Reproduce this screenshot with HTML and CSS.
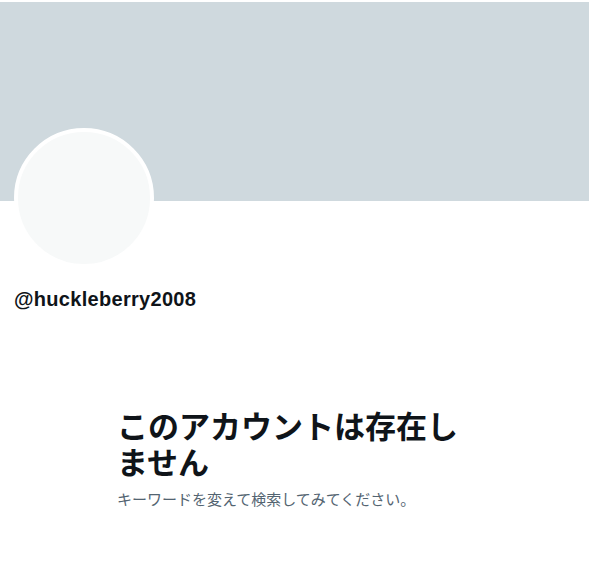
FILE: index.html
```html
<!DOCTYPE html>
<html lang="ja">
<head>
    <meta charset="UTF-8">
    <meta name="viewport" content="width=device-width, initial-scale=1.0">
    <title>プロフィール</title>
    <link rel="stylesheet" href="styles.css">
</head>
<body>
    <div class="perfil">
        <div class="banner"></div>
        <div class="avatar-fila">
            <div class="avatar"></div>
        </div>
        <div class="usuario">@huckleberry2008</div>

        <div class="aviso">
            <h2>このアカウントは存在しません</h2>
            <p>キーワードを変えて検索してみてください。</p>
        </div>
    </div>
</body>
</html>
```

FILE: styles.css
```css
body {
    margin: 0;
    background-color: #ffffff;
    font-family: "Liberation Sans", "Noto Sans CJK JP", sans-serif;
    color: #0f1419;
}

.perfil {
    padding-top: 2px;
}

.banner {
    height: 199px;
    background-color: #cfd9de;
}

.avatar-fila {
    padding: 0 14px;
}

.avatar {
    width: 140px;
    height: 140px;
    box-sizing: border-box;
    margin-top: -73px;
    border: 4px solid #ffffff;
    border-radius: 50%;
    background-color: #f7f9f9;
}

.usuario {
    margin-top: 19px;
    padding-left: 14px;
    font-size: 20px;
    line-height: 24px;
    font-weight: 700;
    letter-spacing: 0.3px;
}

.aviso {
    width: 355px;
    margin: 96px auto 0;
    font-family: "Noto Sans CJK JP", sans-serif;
}

.aviso h2 {
    margin: 0;
    font-size: 31px;
    line-height: 36px;
    font-weight: 700;
}

.aviso p {
    margin: 10px 0 0;
    font-size: 15px;
    line-height: 20px;
    color: #536471;
}
```
